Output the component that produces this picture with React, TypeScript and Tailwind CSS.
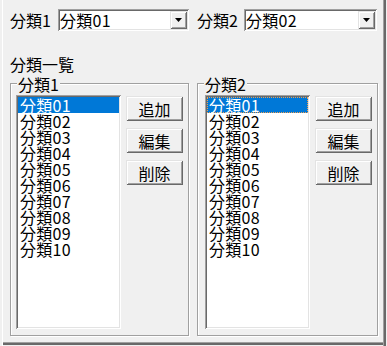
import React from "react";

const font = { fontFamily: '"Noto Sans CJK JP", "Noto Sans", sans-serif' };

const sunken =
  "shadow-[inset_1px_1px_0_#a0a0a0,inset_-1px_-1px_0_#ffffff,inset_2px_2px_0_#696969,inset_-2px_-2px_0_#e3e3e3]";
const raised =
  "shadow-[inset_1px_1px_0_#e3e3e3,inset_-1px_-1px_0_#696969,inset_2px_2px_0_#ffffff,inset_-2px_-2px_0_#a0a0a0]";

function Combo({ value, width }: { value: string; width: string }) {
  return (
    <div className={`${width} h-[22px] bg-white p-[2px] flex ${sunken}`}>
      <div className="flex-1 flex items-center text-[16px] leading-[16px] text-black whitespace-nowrap tracking-[0.3px]">
        {value}
      </div>
      <div className={`w-[17px] h-[18px] bg-[#f0f0f0] flex items-center justify-center ${raised}`}>
        <svg width="7" height="4" viewBox="0 0 7 4" className="block">
          <path d="M0 0H7L3.5 4Z" fill="#000" />
        </svg>
      </div>
    </div>
  );
}

function Btn({ label }: { label: string }) {
  return (
    <div
      className={`w-[57px] h-[25px] bg-[#f0f0f0] flex items-center justify-center text-[16px] leading-[16px] text-black ${raised}`}
    >
      {label}
    </div>
  );
}

const items = ["01", "02", "03", "04", "05", "06", "07", "08", "09", "10"].map((n) => "分類" + n);

function ListBox({ focused }: { focused: boolean }) {
  return (
    <div className={`w-[105px] h-[234px] bg-white p-[2px] ${sunken}`}>
      {items.map((t, i) => (
        <div
          key={t}
          className={
            i === 0
              ? focused
                ? "h-[16px] leading-[14px] pl-[1px] bg-[#0078d7] text-white border border-dotted border-[#f0a050] whitespace-nowrap tracking-[0.3px]"
                : "h-[16px] leading-[16px] pl-[2px] bg-[#0078d7] text-white whitespace-nowrap tracking-[0.3px]"
              : "h-[16px] leading-[16px] pl-[2px] text-black whitespace-nowrap tracking-[0.3px]"
          }
        >
          {t}
        </div>
      ))}
    </div>
  );
}

function Group({
  title,
  width,
  padLeft,
  focused,
}: {
  title: string;
  width: string;
  padLeft: string;
  focused: boolean;
}) {
  return (
    <div
      className={`relative ${width} h-[253px] border border-[#a0a0a0] shadow-[inset_1px_1px_0_#ffffff,1px_1px_0_#ffffff] ${padLeft} pt-[11px] flex gap-[5px]`}
    >
      <div className="absolute left-[6px] top-[-8px] bg-[#f0f0f0] px-[1px] text-[16px] leading-[16px] text-black">
        {title}
      </div>
      <ListBox focused={focused} />
      <div className="flex flex-col gap-[7px] pt-[1px]">
        <Btn label="追加" />
        <Btn label="編集" />
        <Btn label="削除" />
      </div>
    </div>
  );
}

export default function App() {
  return (
    <div
      className="w-[387px] h-[346px] bg-[#f0f0f0] text-[16px] text-black overflow-hidden shadow-[inset_2px_0_0_#f0f0f0,inset_3px_0_0_#ffffff,inset_-1px_0_0_#f0f0f0,inset_-3px_0_0_#696969,inset_-4px_0_0_#a0a0a0,inset_0_-1px_0_#f0f0f0,inset_0_-3px_0_#696969,inset_0_-4px_0_#a0a0a0]"
      style={font}
    >
      <div className="flex items-start pt-[9px] pl-[10px]">
        <div className="w-[48px] h-[22px] flex items-center leading-[16px]">分類1</div>
        <Combo value="分類01" width="w-[131px]" />
        <div className="ml-[8px] w-[47px] h-[22px] flex items-center leading-[16px]">分類2</div>
        <Combo value="分類02" width="w-[133px]" />
      </div>
      <div className="pl-[10px] mt-[25px] leading-[16px] h-[16px]">分類一覧</div>
      <div className="flex pl-[10px] mt-[11px] gap-[8px]">
        <Group title="分類1" width="w-[179px]" padLeft="pl-[5px]" focused={false} />
        <Group title="分類2" width="w-[181px]" padLeft="pl-[7px]" focused={true} />
      </div>
    </div>
  );
}
